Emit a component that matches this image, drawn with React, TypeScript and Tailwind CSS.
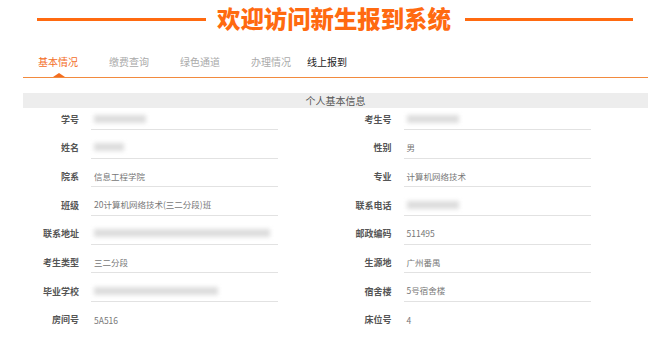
import React from 'react';

type Field = { label: string; value?: string; blur?: number };

const rows: [Field, Field][] = [
  [{ label: '学号', blur: 52 }, { label: '考生号', blur: 52 }],
  [{ label: '姓名', blur: 30 }, { label: '性别', value: '男' }],
  [{ label: '院系', value: '信息工程学院' }, { label: '专业', value: '计算机网络技术' }],
  [{ label: '班级', value: '20计算机网络技术(三二分段)班' }, { label: '联系电话', blur: 52 }],
  [{ label: '联系地址', blur: 176 }, { label: '邮政编码', value: '511495' }],
  [{ label: '考生类型', value: '三二分段' }, { label: '生源地', value: '广州番禺' }],
  [{ label: '毕业学校', blur: 124 }, { label: '宿舍楼', value: '5号宿舍楼' }],
  [{ label: '房间号', value: '5A516' }, { label: '床位号', value: '4' }],
];

const tabs = [
  { name: '基本情况', cls: 'text-[#f36d1f] w-[40px] mr-[31px]' },
  { name: '缴费查询', cls: 'text-[#aaaaaa] w-[40px] mr-[31px]' },
  { name: '绿色通道', cls: 'text-[#aaaaaa] w-[40px] mr-[31px]' },
  { name: '办理情况', cls: 'text-[#aaaaaa] w-[40px] mr-[16px]' },
  { name: '线上报到', cls: 'text-[#1a1a1a] w-[40px]' },
];

function Cell({ f, last }: { f: Field; last: boolean }) {
  return (
    <div className="flex items-center">
      <div className="w-[56px] text-right text-[9px] font-bold text-[#555555] leading-none">{f.label}</div>
      <div
        className={`ml-[12px] w-[187px] h-[22px] pl-[3px] flex items-center ${last ? '' : 'border-b border-[#e2e2e2]'}`}
      >
        {f.blur ? (
          <div className="h-[8px] bg-[#dddddd] blur-[2px]" style={{ width: f.blur }} />
        ) : (
          <span className="text-[8.5px] text-[#777777] leading-none">{f.value}</span>
        )}
      </div>
    </div>
  );
}

export default function App() {
  return (
    <div
      className="w-[668px] h-[339px] bg-white overflow-hidden"
      style={{ fontFamily: '"Noto Sans CJK SC", "Liberation Sans", sans-serif' }}
    >
      {/* Title */}
      <div className="flex items-center pl-[37px] pt-[5px] h-[33px]">
        <div className="w-[169px] h-[3px] bg-[#ff6a10]" />
        <h1 className="ml-[11px] text-[23.4px] font-black text-[#ff6a10] leading-none">
          欢迎访问新生报到系统
        </h1>
        <div className="ml-[14px] w-[168px] h-[3px] bg-[#ff6a10]" />
      </div>

      <div className="ml-[23px] w-[625px]">
        {/* Tabs */}
        <div className="relative flex items-center pl-[15px] mt-[14px] h-[31px] border-b border-[#f28a3e]">
          {tabs.map((t) => (
            <span key={t.name} className={`text-[10px] leading-none whitespace-nowrap ${t.cls}`}>
              {t.name}
            </span>
          ))}
          <div className="absolute left-[30px] bottom-0 w-0 h-0 border-l-[6px] border-r-[6px] border-b-[4px] border-l-transparent border-r-transparent border-b-[#f36d1f]" />
        </div>

        {/* Section header */}
        <div className="mt-[15px] h-[15px] bg-[#ededed] flex items-center justify-center">
          <span className="text-[10px] text-[#555555] leading-none">个人基本信息</span>
        </div>

        {/* Fields */}
        <div className="flex flex-col gap-[6.7px]">
          {rows.map((r, i) => (
            <div key={i} className="grid grid-cols-2">
              <Cell f={r[0]} last={i === rows.length - 1} />
              <Cell f={r[1]} last={i === rows.length - 1} />
            </div>
          ))}
        </div>
      </div>
    </div>
  );
}
